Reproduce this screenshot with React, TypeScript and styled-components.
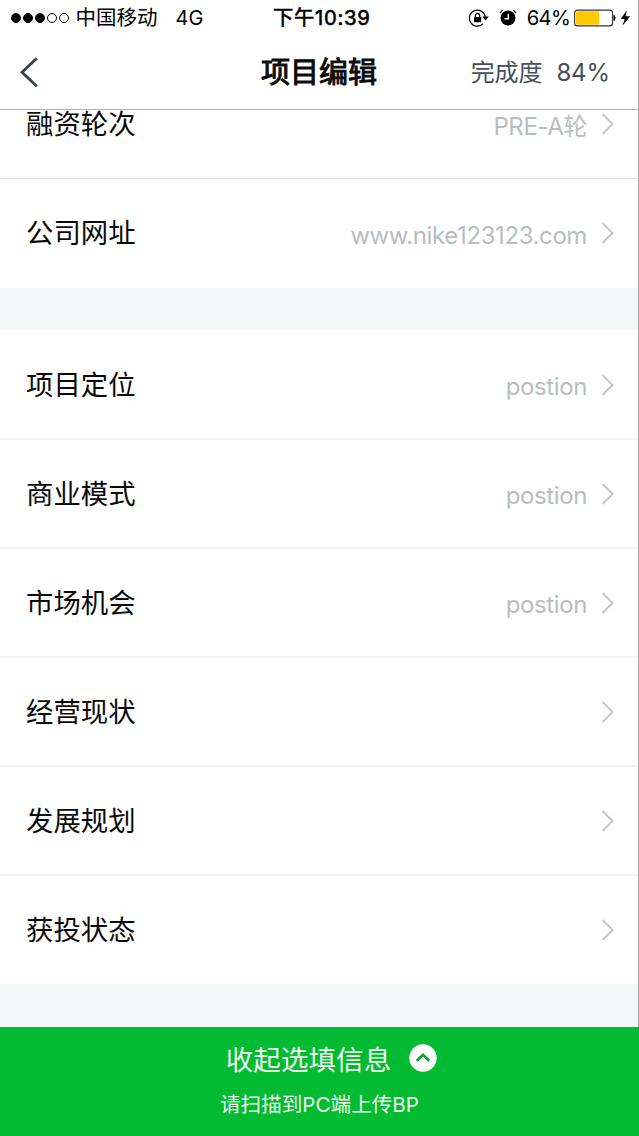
import React from "react";
import styled, { createGlobalStyle } from "styled-components";

const GlobalStyle = createGlobalStyle`
  *, *::before, *::after { box-sizing: border-box; }
  body {
    margin: 0;
    background: #fff;
    font-family: Inter, "Noto Sans CJK SC", sans-serif;
  }
`;

const Screen = styled.div`
  position: relative;
  width: 639px;
  height: 1136px;
  display: flex;
  flex-direction: column;
  overflow: hidden;
  background: #fff;
`;

const EdgeLine = styled.div`
  position: absolute;
  top: 0;
  right: 0;
  width: 1px;
  height: 1027px;
  background: #a3a6a8;
`;

const StatusBar = styled.div`
  flex: none;
  height: 36px;
  padding: 0 8px 0 11px;
  display: grid;
  grid-template-columns: 262px 98px 1fr;
  align-items: center;
  color: #000;
  line-height: 36px;
  white-space: nowrap;
`;

const StatusGroup = styled.div<{ $end?: boolean }>`
  display: flex;
  align-items: center;
  justify-content: ${(p) => (p.$end ? "flex-end" : "flex-start")};
`;

const SignalDots = styled.div`
  display: flex;
  gap: 2px;
  margin-right: 6.5px;
`;

const Dot = styled.span<{ $filled: boolean }>`
  width: 10px;
  height: 10px;
  border-radius: 50%;
  border: 1px solid #000;
  background: ${(p) => (p.$filled ? "#000" : "transparent")};
`;

const Carrier = styled.span`
  font-size: 20.5px;
`;

const Network = styled.span`
  margin-left: 18px;
  font-size: 20px;
`;

const Clock = styled.span`
  font-size: 20.3px;
  font-weight: 400;
  letter-spacing: 0.7px;
  -webkit-text-stroke: 0.6px #000;
`;

const Percent = styled.span`
  margin: 0 4px 0 10px;
  font-size: 20.3px;
  letter-spacing: -0.8px;
`;

const LockIcon = styled.svg`
  margin-right: 10px;
`;

const NavBar = styled.header`
  flex: none;
  height: 74px;
  padding: 0 29px 0 19px;
  display: grid;
  grid-template-columns: 242px 1fr auto;
  align-items: center;
  border-bottom: 1px solid #b2b4b5;
`;

const Title = styled.h1`
  margin: 0;
  font-size: 29px;
  line-height: 72px;
  font-weight: 400;
  color: #0b0b0b;
  -webkit-text-stroke: 1px #0b0b0b;
`;

const Progress = styled.div`
  display: flex;
  justify-content: flex-end;
  gap: 14px;
  font-size: 24px;
  line-height: 72px;
  letter-spacing: -0.1px;
  color: #46505a;
  white-space: nowrap;
`;

const Content = styled.main`
  flex: none;
  height: 917px;
  overflow: hidden;
  background: #f3f7f8;
`;

const Row = styled.div`
  height: 109px;
  padding: 0 25px 0 26px;
  display: flex;
  align-items: center;
  border-bottom: 1px solid #e5e6e7;
`;

const Group = styled.section<{ $scrolled?: boolean }>`
  margin-top: ${(p) => (p.$scrolled ? "-40px" : "42px")};
  padding-top: ${(p) => (p.$scrolled ? "0" : "1px")};
  background: #fff;

  ${Row} {
    ${(p) => !p.$scrolled && "border-bottom: 2px solid #f0f1f1;"}
  }
  ${Row}:last-child {
    height: ${(p) => (p.$scrolled ? "109px" : "108px")};
    border-bottom: 1px solid #fff;
  }
`;

const Label = styled.span`
  flex: 1;
  font-size: 27.4px;
  line-height: 40px;
  color: #0a0a0a;

  ${Group}:first-child & {
    padding-bottom: 1px;
  }
`;

const Value = styled.span`
  margin-right: 14px;
  padding-top: 5px;
  font-size: 24px;
  line-height: 36px;
  letter-spacing: -0.4px;
  color: #b9bdbf;
`;

const Footer = styled.footer`
  flex: none;
  height: 109px;
  display: flex;
  flex-direction: column;
  align-items: center;
  background: #03bb33;
  color: #eefbea;
`;

const FooterAction = styled.div`
  margin-top: 13px;
  margin-left: 24px;
  display: flex;
  align-items: center;
  gap: 18px;
  font-size: 27.6px;
  line-height: 40px;

  svg {
    margin-bottom: 4px;
  }
`;

const FooterHint = styled.div`
  margin-top: 10px;
  font-size: 20.6px;
  line-height: 30px;
`;

const Chevron = () => (
  <svg width="13" height="22" viewBox="0 0 13 22" fill="none">
    <path d="M1.5 1 11.5 11 1.5 21" stroke="#c3c6c8" strokeWidth="2" />
  </svg>
);

const Item = ({ label, value }: { label: string; value?: string }) => (
  <Row>
    <Label>{label}</Label>
    {value && <Value>{value}</Value>}
    <Chevron />
  </Row>
);

const details = [
  { label: "项目定位", value: "postion" },
  { label: "商业模式", value: "postion" },
  { label: "市场机会", value: "postion" },
  { label: "经营现状" },
  { label: "发展规划" },
  { label: "获投状态" },
];

export default function App() {
  return (
    <Screen>
      <GlobalStyle />
      <StatusBar>
        <StatusGroup>
          <SignalDots>
            {[true, true, true, false, false].map((filled, i) => (
              <Dot key={i} $filled={filled} />
            ))}
          </SignalDots>
          <Carrier>中国移动</Carrier>
          <Network>4G</Network>
        </StatusGroup>
        <Clock>下午10:39</Clock>
        <StatusGroup $end>
          <LockIcon width="20" height="18" viewBox="0 0 20 18" fill="none">
            <path d="M14.2 14.6A8 8 0 1 1 16.3 8" stroke="#000" strokeWidth="1.2" />
            <path d="M13.4 7.6h6.4l-3.2 3.8z" fill="#000" />
            <rect x="5" y="8" width="7.2" height="5.2" rx=".6" fill="#000" />
            <path d="M6.5 8.2V6.5a2.1 2.1 0 0 1 4.2 0v1.7" stroke="#000" strokeWidth="1.2" />
          </LockIcon>
          <svg width="18" height="18" viewBox="0 0 18 18" fill="none">
            <circle cx="9" cy="9" r="7.5" fill="#000" />
            <path d="M1 4.2A8 8 0 0 1 4 1M14 1a8 8 0 0 1 3 3.2" stroke="#000" strokeWidth="1.1" />
            <path d="M9.3 4.8v5H5.5" stroke="#fff" strokeWidth="1.4" />
          </svg>
          <Percent>64%</Percent>
          <svg width="42" height="18" viewBox="0 0 42 18">
            <rect x=".6" y="1.1" width="38" height="15.8" rx="3" fill="#fff" stroke="#333" strokeWidth="1.1" />
            <path d="M4 2.2h21.2v13.6H4A2.2 2.2 0 0 1 1.8 13.6V4.4A2.2 2.2 0 0 1 4 2.2z" fill="#ffc900" />
            <path d="M40 6.4q2.3 2.6 0 5.2z" fill="#000" stroke="#000" />
          </svg>
          <svg width="15" height="18" viewBox="0 0 15 18">
            <path d="M10.8 1.2 4.8 10h4L6.4 16.8 14.3 7.3H9.6z" fill="#000" />
          </svg>
        </StatusGroup>
      </StatusBar>
      <NavBar>
        <svg width="20" height="32" viewBox="0 0 20 32" fill="none">
          <path d="M17.8 1.2 3 15.2l14.8 14" stroke="#36424c" strokeWidth="2.8" />
        </svg>
        <Title>项目编辑</Title>
        <Progress>
          <span>完成度</span>
          <span>84%</span>
        </Progress>
      </NavBar>
      <Content>
        <Group $scrolled>
          <Item label="融资轮次" value="PRE-A轮" />
          <Item label="公司网址" value="www.nike123123.com" />
        </Group>
        <Group>
          {details.map((d) => (
            <Item key={d.label} {...d} />
          ))}
        </Group>
      </Content>
      <Footer>
        <FooterAction>
          <span>收起选填信息</span>
          <svg width="28" height="28" viewBox="0 0 28 28" fill="none">
            <circle cx="14" cy="14" r="13.7" fill="#fff" />
            <path d="m7.8 16.8 6.2-6 6.2 6" stroke="#03a52d" strokeWidth="2.6" />
          </svg>
        </FooterAction>
        <FooterHint>请扫描到PC端上传BP</FooterHint>
      </Footer>
      <EdgeLine />
    </Screen>
  );
}
